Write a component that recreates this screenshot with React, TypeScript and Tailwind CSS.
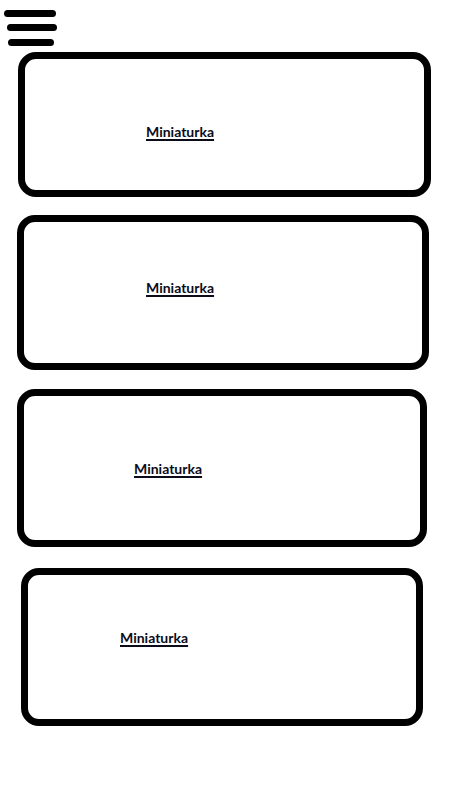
const lines = [
  { cls: 'ml-[4px] w-[52px]' },
  { cls: 'ml-[7px] w-[50px] mt-[7px]' },
  { cls: 'ml-[8px] w-[46px] mt-[8px]' },
];

const cards = [
  { box: 'mt-[6px] ml-[18px] w-[413px] h-[145px]', text: 'pl-[121px] pt-[60px]' },
  { box: 'mt-[18px] ml-[17px] w-[412px] h-[155px]', text: 'pl-[122px] pt-[53px]' },
  { box: 'mt-[19px] ml-[17px] w-[410px] h-[158px]', text: 'pl-[110px] pt-[60px]' },
  { box: 'mt-[21px] ml-[21px] w-[402px] h-[158px]', text: 'pl-[92px] pt-[50px]' },
];

export default function App() {
  return (
    <div className="w-[453px] h-[792px] bg-white overflow-hidden font-['Lato','Open_Sans',sans-serif]">
      <div className="pt-[10px] flex flex-col">
        {lines.map((l, i) => (
          <div key={i} className={`h-[7px] rounded-full bg-black ${l.cls}`} />
        ))}
      </div>

      <div className="flex flex-col">
        {cards.map((c, i) => (
          <div key={i} className={`border-[7px] border-black rounded-[18px] bg-white ${c.box}`}>
            <div className={c.text}>
              <span className="text-[14px] leading-[20px] font-bold text-[#0b0b1a] underline underline-offset-[2px] decoration-[1.5px]">
                Miniaturka
              </span>
            </div>
          </div>
        ))}
      </div>
    </div>
  );
}
